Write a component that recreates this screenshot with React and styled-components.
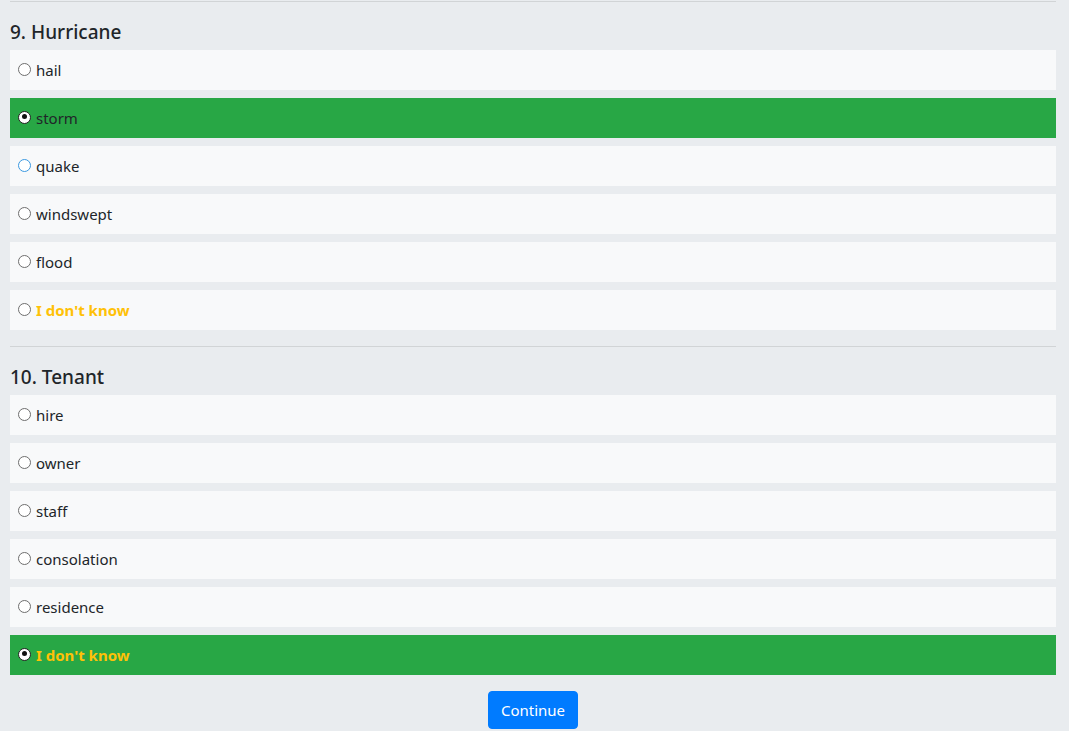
import React, { useState } from "react";
import styled, { createGlobalStyle, css } from "styled-components";

const Global = createGlobalStyle`
  html, body { margin: 0; padding: 0; background: #e9ecef; }
  body { font-family: "Segoe UI", "Noto Sans", "Open Sans", sans-serif; color: #212529; font-size: 16px; }
`;

const Page = styled.div`
  padding: 1px 13px 0 10px;
  display: flex;
  flex-direction: column;
`;

const Rule = styled.hr`
  margin: 0 0 16px;
  border: 0;
  border-top: 1px solid rgba(0, 0, 0, 0.1);
  height: 0;
`;

const Section = styled.section`
  display: flex;
  flex-direction: column;
  margin-bottom: 16px;
`;

const Heading = styled.h5`
  margin: 0 0 6px;
  padding-top: 2px;
  font-size: 19px;
  font-weight: 500;
  line-height: 24px;
  color: #212529;
`;

const List = styled.div`
  display: flex;
  flex-direction: column;
  gap: 8px;
`;

const Option = styled.label`
  display: flex;
  align-items: center;
  height: 40px;
  padding-left: 8px;
  box-sizing: border-box;
  background: ${(p) => (p.$selected ? "#28a745" : "#f8f9fa")};
  cursor: pointer;
  font-size: 15px;
`;

const Radio = styled.span`
  width: 13px;
  height: 13px;
  box-sizing: border-box;
  border-radius: 50%;
  background: #fff;
  border: 1.5px solid ${(p) => (p.$focus ? "#3b99e0" : "#6e6e6e")};
  margin-right: 5px;
  flex: none;
  position: relative;
  top: -1px;
  ${(p) =>
    p.$checked &&
    css`
      border: 1.5px solid #222;
      &::after {
        content: "";
        position: absolute;
        left: 2.5px;
        top: 2.5px;
        width: 5px;
        height: 5px;
        border-radius: 50%;
        background: #111;
      }
    `}
`;

const Label = styled.span`
  ${(p) =>
    p.$unknown &&
    css`
      color: #ffc107;
      font-weight: 700;
    `}
`;

const Footer = styled.div`
  display: flex;
  justify-content: center;
  padding-bottom: 2px;
`;

const Button = styled.button`
  background: #007bff;
  color: #fff;
  border: 1px solid #007bff;
  border-radius: 4px;
  height: 38px;
  padding: 0 12px;
  font-family: inherit;
  font-size: 15px;
  cursor: pointer;
`;

const questions = [
  {
    title: "9. Hurricane",
    options: ["hail", "storm", "quake", "windswept", "flood", "I don't know"],
    selected: 1,
    focus: 2,
  },
  {
    title: "10. Tenant",
    options: ["hire", "owner", "staff", "consolation", "residence", "I don't know"],
    selected: 5,
  },
];

export default function App() {
  const [sel, setSel] = useState(questions.map((q) => q.selected));
  return (
    <>
      <Global />
      <Page>
        {questions.map((q, qi) => (
          <Section key={q.title}>
            <Rule />
            <Heading>{q.title}</Heading>
            <List>
              {q.options.map((o, oi) => (
                <Option
                  key={o}
                  $selected={sel[qi] === oi}
                  onClick={() => setSel((s) => s.map((v, i) => (i === qi ? oi : v)))}
                >
                  <Radio $checked={sel[qi] === oi} $focus={q.focus === oi} />
                  <Label $unknown={o === "I don't know"}>{o}</Label>
                </Option>
              ))}
            </List>
          </Section>
        ))}
        <Footer>
          <Button>Continue</Button>
        </Footer>
      </Page>
    </>
  );
}
